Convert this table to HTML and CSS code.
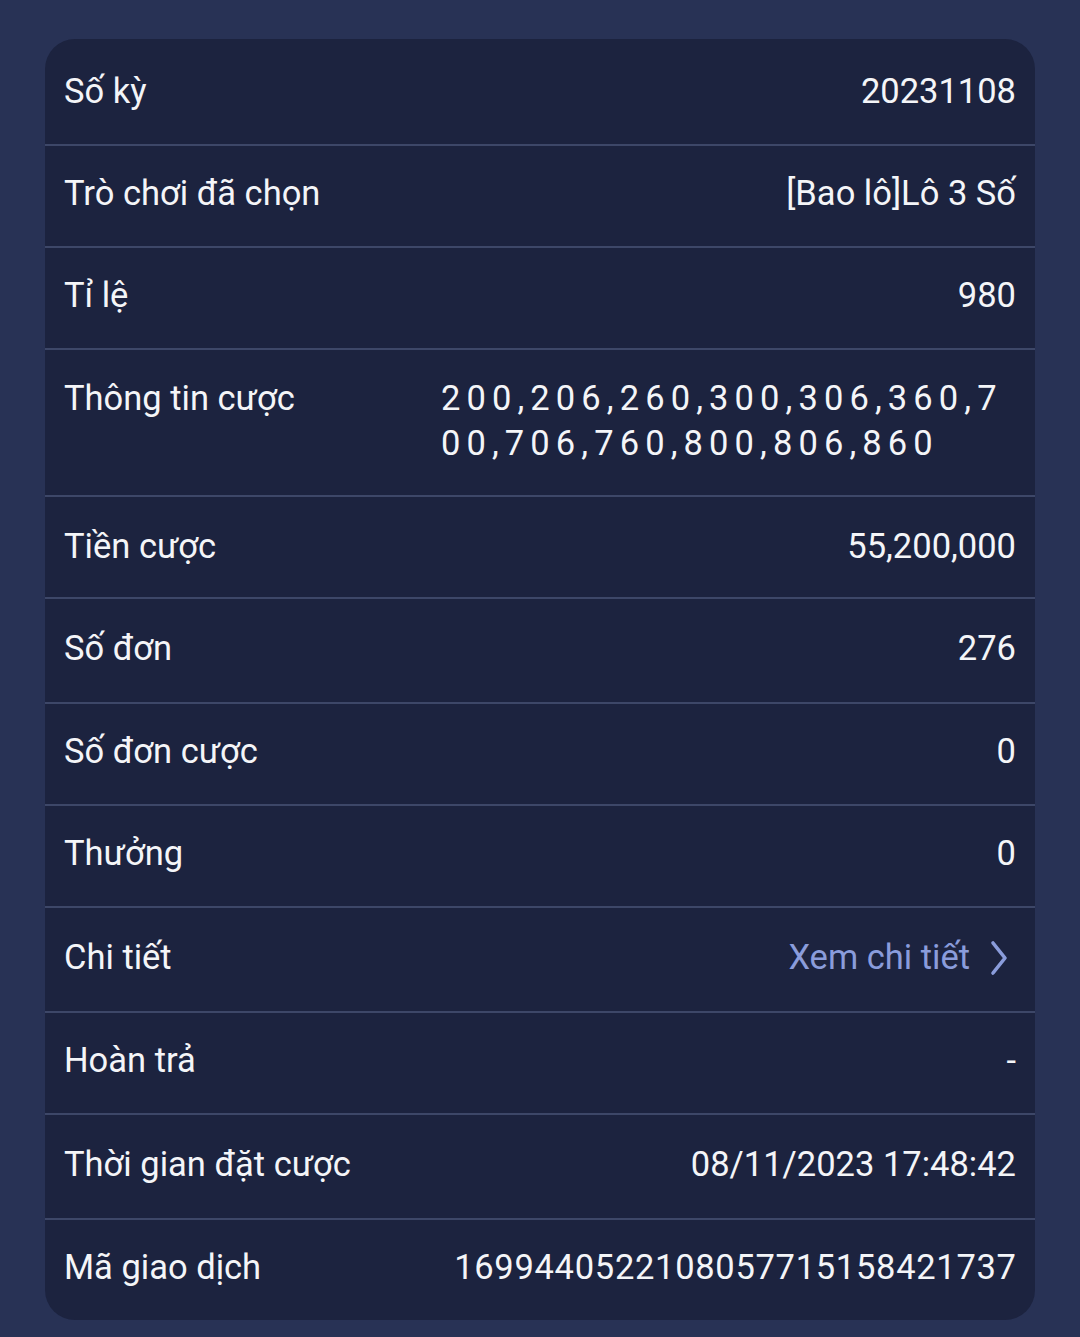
FILE: index.html
```html
<!DOCTYPE html>
<html lang="vi">
<head>
<meta charset="utf-8">
<title>Chi tiết cược</title>
<link rel="stylesheet" href="styles.css">
</head>
<body>
<div class="card">
  <div class="row h107"><span class="label">Số kỳ</span><span class="value">20231108</span></div>
  <div class="row"><span class="label">Trò chơi đã chọn</span><span class="value">[Bao lô]Lô 3 Số</span></div>
  <div class="row"><span class="label">Tỉ lệ</span><span class="value">980</span></div>
  <div class="row tall"><span class="label">Thông tin cược</span><span class="value numbers">200,206,260,300,306,360,700,706,760,800,806,860</span></div>
  <div class="row r-money"><span class="label">Tiền cược</span><span class="value">55,200,000</span></div>
  <div class="row h105"><span class="label">Số đơn</span><span class="value">276</span></div>
  <div class="row"><span class="label">Số đơn cược</span><span class="value">0</span></div>
  <div class="row"><span class="label">Thưởng</span><span class="value">0</span></div>
  <div class="row h105"><span class="label">Chi tiết</span><span class="value link">Xem chi tiết<svg class="chev" width="22" height="38" viewBox="0 0 22 38"><polyline points="5,4 17,19 5,34" fill="none" stroke="currentColor" stroke-width="3.6" stroke-linecap="round" stroke-linejoin="round"/></svg></span></div>
  <div class="row"><span class="label">Hoàn trả</span><span class="value">-</span></div>
  <div class="row h105"><span class="label">Thời gian đặt cược</span><span class="value">08/11/2023 17:48:42</span></div>
  <div class="row last"><span class="label">Mã giao dịch</span><span class="value txid">1699440522108057715158421737</span></div>
</div>
</body>
</html>
```
FILE: styles.css
```css
html, body {
  margin: 0;
  padding: 0;
}
body {
  background: #283255;
  font-family: Roboto, "Noto Sans", sans-serif;
  padding: 39px 45px 17px 45px;
  width: 1080px;
  height: 1337px;
  box-sizing: border-box;
}
.card {
  background: #1c233f;
  border-radius: 30px;
  overflow: hidden;
}
.row {
  display: flex;
  align-items: center;
  justify-content: space-between;
  box-sizing: border-box;
  height: 102px;
  padding: 0 19px 5px 19px;
  border-bottom: 2px solid #3d4768;
  color: #f4f5f8;
  font-size: 34.5px;
  line-height: 45px;
}
.row.h105 { height: 105px; }
.row.h107 { height: 107px; padding-top: 2px; padding-bottom: 2px; }
.row.r-money { padding-bottom: 2px; }
.row.last { height: 100px; border-bottom: none; padding-bottom: 6px; }
.row.tall {
  height: 147px;
  align-items: flex-start;
  padding-top: 26px;
  padding-bottom: 0;
}
.label {
  white-space: nowrap;
}
.value {
  text-align: right;
  white-space: nowrap;
}
.value.txid {
  letter-spacing: 0.7px;
  margin-right: -0.7px;
}
.value.numbers {
  flex: 0 0 575px;
  width: 575px;
  text-align: left;
  white-space: normal;
  word-break: break-all;
  letter-spacing: 6.1px;
}
.value.link {
  color: #8a9cdb;
  display: flex;
  align-items: center;
  gap: 18px;
  margin-right: 6px;
}
.chev {
  display: block;
  margin-top: 2px;
}
```
